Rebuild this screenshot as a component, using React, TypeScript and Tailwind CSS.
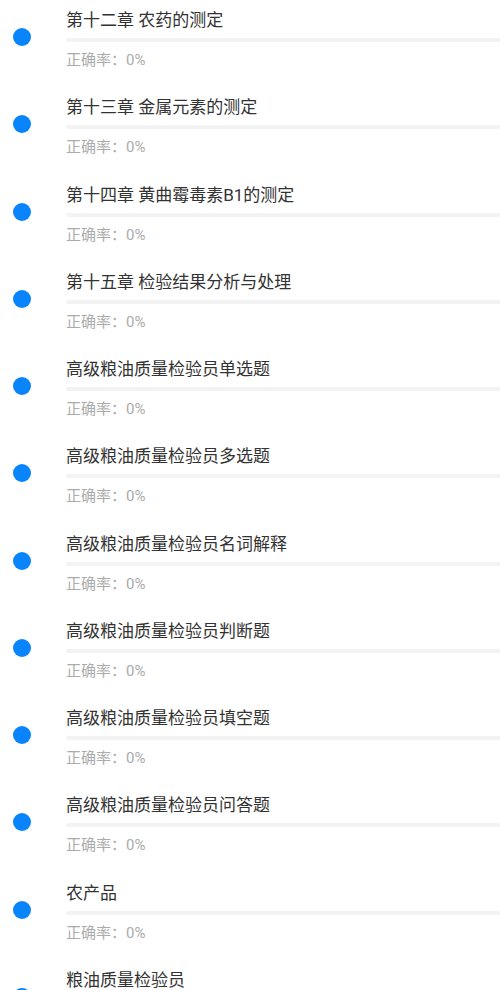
const chapters = [
  "第十二章 农药的测定",
  "第十三章 金属元素的测定",
  "第十四章 黄曲霉毒素B1的测定",
  "第十五章 检验结果分析与处理",
  "高级粮油质量检验员单选题",
  "高级粮油质量检验员多选题",
  "高级粮油质量检验员名词解释",
  "高级粮油质量检验员判断题",
  "高级粮油质量检验员填空题",
  "高级粮油质量检验员问答题",
  "农产品",
  "粮油质量检验员",
];

// one chapter row: blue dot, title, empty progress track, accuracy label
function ChapterRow({ title }: { title: string }) {
  return (
    <div className="flex h-[87.27px] shrink-0">
      <div className="flex w-[66px] shrink-0 justify-start pl-[13px] pt-[28px]">
        <span className="block h-[18px] w-[18px] rounded-full bg-[#0a84fb]" />
      </div>
      <div className="flex min-w-0 flex-1 flex-col">
        <p className="mt-[8px] whitespace-nowrap text-[17px] leading-[24px] text-[#333333]">{title}</p>
        <div className="mt-[6px] h-[4px] w-full rounded-l-full bg-[#f3f3f3]" />
        <p className="mt-[8px] text-[15px] leading-[20px] text-[#ababab]">正确率：0%</p>
      </div>
    </div>
  );
}

export default function App() {
  return (
    <div className="flex h-[990px] w-[500px] flex-col overflow-hidden bg-white font-['Roboto','Noto_Sans_CJK_SC',sans-serif]">
      {chapters.map((c) => (
        <ChapterRow key={c} title={c} />
      ))}
    </div>
  );
}
